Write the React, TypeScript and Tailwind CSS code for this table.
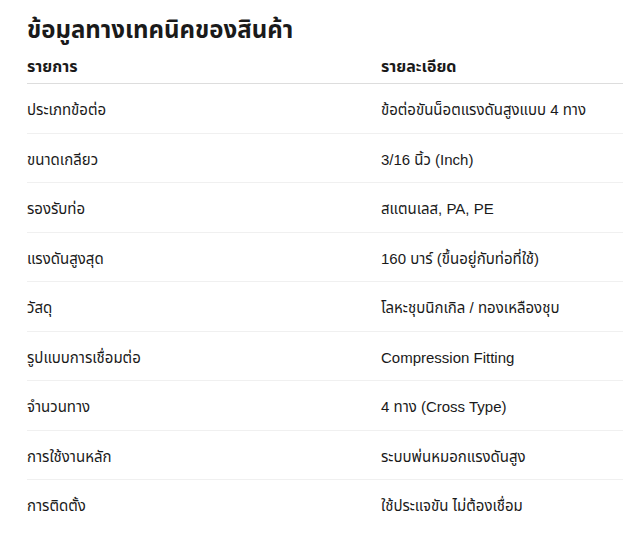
const rows: [string, string][] = [
  ["ประเภทข้อต่อ", "ข้อต่อขันน็อตแรงดันสูงแบบ 4 ทาง"],
  ["ขนาดเกลียว", "3/16 นิ้ว (Inch)"],
  ["รองรับท่อ", "สแตนเลส, PA, PE"],
  ["แรงดันสูงสุด", "160 บาร์ (ขึ้นอยู่กับท่อที่ใช้)"],
  ["วัสดุ", "โลหะชุบนิกเกิล / ทองเหลืองชุบ"],
  ["รูปแบบการเชื่อมต่อ", "Compression Fitting"],
  ["จำนวนทาง", "4 ทาง (Cross Type)"],
  ["การใช้งานหลัก", "ระบบพ่นหมอกแรงดันสูง"],
  ["การติดตั้ง", "ใช้ประแจขัน ไม่ต้องเชื่อม"],
];

export default function App() {
  return (
    <div className="bg-white pl-[27px] pt-[14px] text-[#1a1a1a] font-['Liberation_Sans','Noto_Sans_Thai',sans-serif]">
      <h2 className="text-[24px] font-bold leading-[32px] mb-[1px]">ข้อมูลทางเทคนิคของสินค้า</h2>
      <table className="w-[620px] border-collapse text-[15px]">
        <thead>
          <tr className="border-b border-[#dddddd]">
            <th className="w-[354px] text-left text-[16px] font-bold pt-[9px] pb-[5px] leading-[22px]">รายการ</th>
            <th className="text-left text-[16px] font-bold pt-[9px] pb-[5px] leading-[22px]">รายละเอียด</th>
          </tr>
        </thead>
        <tbody>
          {rows.map(([k, v]) => (
            <tr key={k} className="border-b border-[#f0f0f0] last:border-b-0">
              <td className="pt-[16px] pb-[12px] leading-[20.5px]">{k}</td>
              <td className="pt-[16px] pb-[12px] leading-[20.5px]">{v}</td>
            </tr>
          ))}
        </tbody>
      </table>
    </div>
  );
}
